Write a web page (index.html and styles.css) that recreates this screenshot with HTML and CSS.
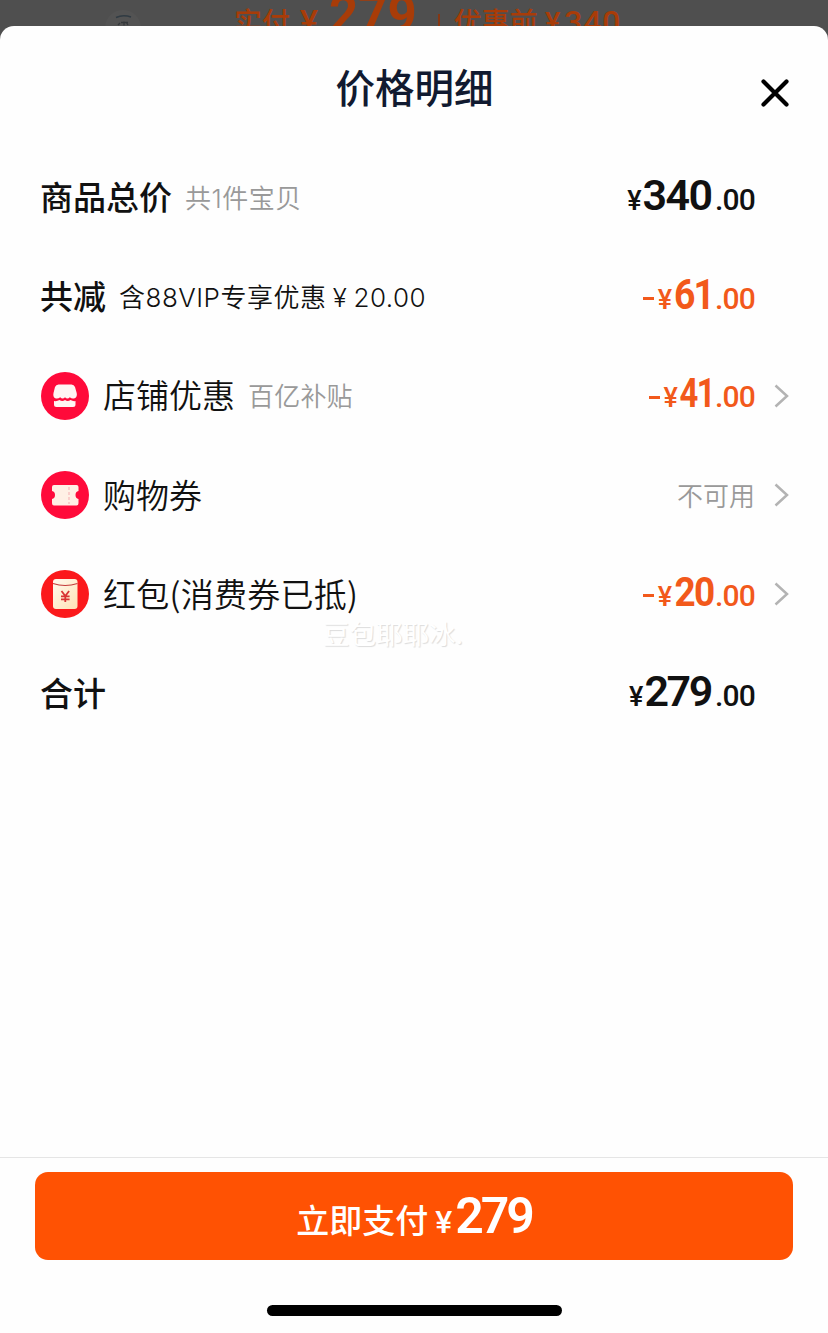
FILE: index.html
```html
<!DOCTYPE html>
<html lang="zh-CN">
<head>
<meta charset="utf-8">
<title>价格明细</title>
<link rel="stylesheet" href="styles.css">
</head>
<body>
<div class="screen">
  <div class="backdrop">
    <svg class="brand" width="40" height="26" viewBox="0 0 40 26"><circle cx="20" cy="28" r="18" fill="#535353"/><path d="M13 17.500Q20 14.500 28 17" fill="none" stroke="#303b43" stroke-width="1.500"/><path d="M15 25l2-2M21 21.500v4M18 22.500h7M23 22l2 3" fill="none" stroke="#34383b" stroke-width="1.300"/></svg>
    <span class="paid">实付</span>
    <span class="paid-yen">¥</span>
    <span class="paid-num">279</span>
    <span class="bar"></span>
    <span class="before">优惠前</span>
    <span class="before-yen">¥</span>
    <span class="before-num">340</span>
  </div>
  <main class="sheet">
    <header class="head">
      <h1 class="title">价格明细</h1>
      <svg class="close" width="28" height="28" viewBox="0 0 28 28"><path d="M2.500 2.500l23 23M25.500 2.500l-23 23" stroke="#000" stroke-width="4.200" stroke-linecap="round"/></svg>
    </header>
    <section class="rows">
      <div class="row">
        <span class="label strong">商品总价</span><span class="note spaced">共1件宝贝</span>
        <span class="price"><span class="yen">¥</span><span class="int">340</span><span class="dec">.00</span></span>
      </div>
      <div class="row">
        <span class="label strong">共减</span><span class="note dark">含88VIP专享优惠<span class="yen-note">¥</span>20.00</span>
        <span class="price off"><span class="minus"></span><span class="yen">¥</span><span class="int n61">61</span><span class="dec">.00</span></span>
      </div>
      <div class="row">
        <svg class="icon" viewBox="0 0 48 48"><circle cx="24" cy="24" r="24" fill="#ff0a3a"/><path d="M17.500 12.500h13q2.500 0 3.500 2.500l1.700 6q.8 4-2 5.200-2.700 1-4.900-1-2.300 2.500-4.800 0-2.400 2.500-4.800 0-2.300 2-5 1-2.500-1.300-1.700-5.200l1.500-6q1-2.500 3.500-2.500z" fill="#fff5f3"/><path d="M13 29q3 .5 5.500-1 2.800 2 5.500 0 2.700 2 5.500 0 2.500 1.500 5 1v3.500q0 2.500-2.500 2.500H15.500Q13 35 13 32.500z" fill="#fff5f3"/></svg>
        <span class="label">店铺优惠</span><span class="note">百亿补贴</span>
        <span class="price off"><span class="minus"></span><span class="yen">¥</span><span class="int small n41">41</span><span class="dec">.00</span></span>
        <svg class="chev" width="16" height="24" viewBox="0 0 16 24"><path d="M2.500 1.500l11.500 10.500-11.500 10.500" fill="none" stroke="#b3b3b3" stroke-width="2.500"/></svg>
      </div>
      <div class="row">
        <svg class="icon" viewBox="0 0 48 48"><circle cx="24" cy="24" r="24" fill="#ff0a3a"/><path d="M13 14h22.500q2 0 2 2v4q-3 .5-3 4t3 4v4.300q0 2.200-2 2.200H13q-2 0-2-2.200V28q3-.5 3-4t-3-4v-4q0-2 2-2z" fill="#fff0e5"/><path d="M28 16v17" stroke="#f8bfc0" stroke-width="1.400" stroke-dasharray="3 2"/></svg>
        <span class="label">购物券</span>
        <span class="price unavailable">不可用</span>
        <svg class="chev" width="16" height="24" viewBox="0 0 16 24"><path d="M2.500 1.500l11.500 10.500-11.500 10.500" fill="none" stroke="#b3b3b3" stroke-width="2.500"/></svg>
      </div>
      <div class="row">
        <svg class="icon" viewBox="0 0 48 48"><defs><linearGradient id="pocket" x2="1" y2="1"><stop stop-color="#fffaf0"/><stop offset="1" stop-color="#ffe2b4"/></linearGradient></defs><circle cx="24" cy="24" r="24" fill="#fb191b"/><rect x="12" y="9" width="24.500" height="30" rx="3" fill="url(#pocket)"/><path d="M12 13.500q12 4 24.500 0" fill="none" stroke="#c33a3a" stroke-width="1.200"/><path d="M20.500 21l3.800 5 3.800-5M24.300 26v6M20 26.300h8.600M20 29.300h8.600" fill="none" stroke="#d93435" stroke-width="1.800"/></svg>
        <span class="label wide">红包(消费券已抵)</span>
        <span class="price off"><span class="minus"></span><span class="yen">¥</span><span class="int small n20">20</span><span class="dec">.00</span></span>
        <svg class="chev" width="16" height="24" viewBox="0 0 16 24"><path d="M2.500 1.500l11.500 10.500-11.500 10.500" fill="none" stroke="#b3b3b3" stroke-width="2.500"/></svg>
        <span class="watermark">豆包耶耶冰.</span>
      </div>
      <div class="row">
        <span class="label strong">合计</span>
        <span class="price"><span class="yen">¥</span><span class="int n279">279</span><span class="dec">.00</span></span>
      </div>
    </section>
    <footer class="foot">
      <button class="pay"><span class="pay-label">立即支付</span><span class="pay-yen">¥</span><span class="pay-num">279</span></button>
      <div class="home"></div>
    </footer>
  </main>
</div>
</body>
</html>
```
FILE: styles.css
```css
* { box-sizing: border-box; }
body { margin: 0; background: #4f4f4f; font-family: Inter, "Noto Sans CJK SC", sans-serif; color: #111; }
.screen { height: 1333px; display: flex; flex-direction: column; overflow: hidden; background: #4f4f4f; }
.backdrop { height: 26px; flex: none; display: flex; align-items: flex-start; overflow: hidden; padding-left: 103px; color: #a83c08; white-space: nowrap; }
.brand { flex: none; margin-right: 91px; }
.paid, .before { font: 500 28px/40px "Noto Sans CJK SC", sans-serif; margin-top: 1px; }
.paid-yen { font: 500 34px/40px Roboto, sans-serif; margin: 2px 0 0 10px; }
.paid-num { font: 700 51px/50px Roboto, sans-serif; margin: -10px 0 0 11px; }
.bar { width: 2px; height: 20px; background: #853713; margin: 14px 14px 0 21px; }
.before-yen { font: 500 29px/40px Roboto, sans-serif; margin: 3px 0 0 7px; }
.before-num { font: 500 32px/40px Roboto, sans-serif; margin: 2px 0 0 4px; letter-spacing: .8px; }
.sheet { flex: 1; display: flex; flex-direction: column; background: #fefefe; border-radius: 14px 14px 0 0; }
.head { height: 122px; flex: none; display: grid; grid-template-columns: 1fr auto 1fr; align-items: start; padding: 31px 39px 0; }
.title { grid-column: 2; margin: 0 0 0 1px; font: 500 39.500px/58px "Noto Sans CJK SC", sans-serif; color: #111a30; }
.close { justify-self: end; margin-top: 22px; }
.rows { display: grid; grid-template-rows: repeat(6, 99.200px); padding: 0 39px 0 41px; }
.row { position: relative; display: flex; align-items: center; white-space: nowrap; }
.icon { width: 48px; height: 48px; margin-right: 14px; }
.label { font: 350 33px/48px "Noto Sans CJK SC", sans-serif; padding-bottom: 3px; }
.wide { letter-spacing: .25px; }
.strong { font-weight: 500; margin-left: -1px; }
.note { font: 350 26px/38px Inter, "Noto Sans CJK SC", sans-serif; color: #999; margin: 2px 0 0 13px; letter-spacing: .2px; }
.spaced { letter-spacing: .5px; }
.dark { color: #111; letter-spacing: .5px; }
.yen-note { display: inline-block; width: 27px; text-align: center; }
.price { margin-left: auto; padding-right: 34px; display: flex; align-items: baseline; font-family: Roboto, sans-serif; font-weight: 600; line-height: 50px; }
.price:has(+ .chev) { padding-right: 18px; }
.off { color: #f2591b; }
.minus { width: 11px; height: 3px; background: currentColor; align-self: center; margin: 3px 4px 0 0; }
.yen { font-size: 27px; font-weight: 500; margin-right: 1px; }
.int { font-size: 43px; letter-spacing: -1.600px; margin-right: 3.500px; transform-origin: right; }
.n279 { letter-spacing: -2.400px; margin-right: 4px; }
.small { font-size: 41px; }
.n61 { font-weight: 700; letter-spacing: -2px; transform: scaleX(.87); margin-left: -5.500px; margin-right: 2px; }
.n41 { font-weight: 700; letter-spacing: -2px; transform: scaleX(.8); margin-left: -8px; margin-right: 1px; }
.n20 { font-weight: 700; transform: scaleX(.9); margin-left: -3.500px; margin-right: 1.500px; }
.dec { font-size: 30px; font-weight: 500; letter-spacing: -.8px; }
.unavailable { font: 350 26px/38px "Noto Sans CJK SC", sans-serif; color: #999; padding-bottom: 1px; }
.chev { flex: none; }
.watermark { position: absolute; left: 282px; top: 69px; font: 400 26.500px/38px "Noto Sans CJK SC", sans-serif; color: #fff; text-shadow: 1px 1px 1px #dcdcdc; }
.foot { margin-top: auto; height: 176px; border-top: 1px solid #e5e5e5; padding: 14px 35px 0; display: flex; flex-direction: column; align-items: center; }
.pay { width: 100%; height: 88px; padding: 0; border: 0; border-radius: 13px; background: #ff5203; color: #fff; display: flex; justify-content: center; align-items: baseline; line-height: 88px; }
.pay-label { font: 500 33px/88px "Noto Sans CJK SC", sans-serif; }
.pay-yen { font: 500 32px/88px Roboto, sans-serif; margin: 0 3px 0 7px; }
.pay-num { font: 600 50px/88px Roboto, sans-serif; letter-spacing: -3px; }
.home { width: 295px; height: 11px; margin-top: 45px; border-radius: 6px; background: #000; }
```
